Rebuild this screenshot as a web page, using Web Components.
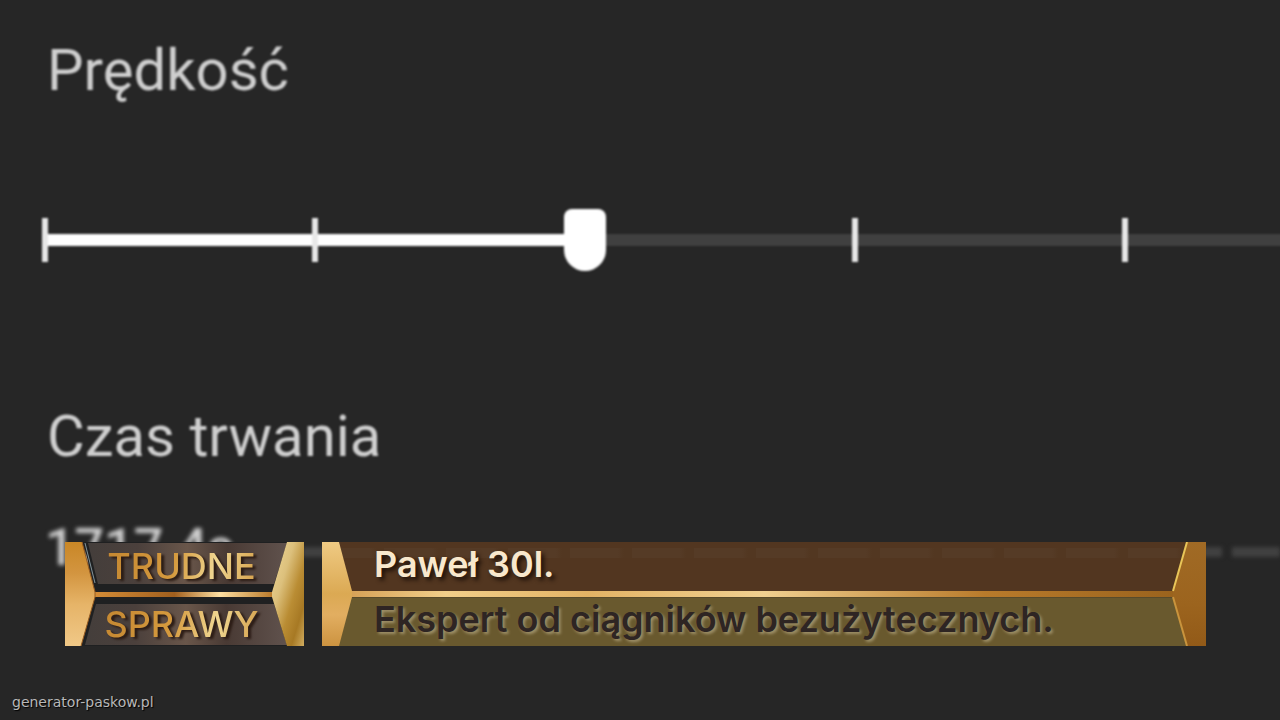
<!DOCTYPE html>
<html lang="pl">
<head>
<meta charset="utf-8">
<meta name="viewport" content="width=device-width, initial-scale=1">
<title>Trudne Sprawy</title>
<style>
html, body { margin: 0; background: #262626; }
</style>
</head>
<body>
<caption-scene>
  <speed-setting label="Prędkość" value="2"></speed-setting>
  <duration-setting label="Czas trwania" value="1717.4s"></duration-setting>
  <show-logo slot="overlay"><span>TRUDNE</span><span slot="second">SPRAWY</span></show-logo>
  <name-plate slot="overlay"><span>Paweł 30l.</span><span slot="detail">Ekspert od ciągników bezużytecznych.</span></name-plate>
  <a slot="credit" href="#">generator-paskow.pl</a>
</caption-scene>

<script>
const define = (name, html, setup) => {
  const template = document.createElement('template');
  template.innerHTML = html;
  customElements.define(name, class extends HTMLElement {
    constructor() {
      super();
      this.attachShadow({ mode: 'open' }).append(template.content.cloneNode(true));
    }
    connectedCallback() { if (setup) setup(this, this.shadowRoot); }
  });
};

define('speed-setting', `
<style>
:host { display: block; color: #cfcfcf; font: 58px/68px Roboto, sans-serif; }
label { display: block; margin-left: 2px; filter: blur(1px); }
.rail { display: grid; width: 110%; margin-top: 102px; height: 68px; align-items: center; filter: blur(1px); }
input, .ticks { grid-area: 1 / 1; }
input { appearance: none; -webkit-appearance: none; box-sizing: border-box; width: calc(100% + 42px);
  height: 68px; margin: 0 0 0 -21px; background: none; outline: none; }
input::-webkit-slider-runnable-track { height: 12px; background:
  linear-gradient(90deg, #fff 40%, #404040 40%) 21px 0 / calc(100% - 42px) 100% no-repeat; }
input::-webkit-slider-thumb { -webkit-appearance: none; width: 42px; height: 62px; margin-top: -25px;
  background: #fff; border-radius: 8px 8px 21px 21px; }
.ticks { display: flex; justify-content: space-between; margin: 0 -3px; pointer-events: none; }
.ticks i { width: 6px; height: 44px; background: #e8e8e8; }
.ticks i:nth-child(3) { visibility: hidden; }
</style>
<label for="speed"></label>
<div class="rail">
  <input id="speed" type="range" min="0" max="5">
  <div class="ticks"><i></i><i></i><i></i><i></i><i></i><i></i></div>
</div>`, (host, root) => {
  root.querySelector('label').textContent = host.getAttribute('label');
  root.querySelector('input').value = host.getAttribute('value');
});

define('duration-setting', `
<style>
:host { display: block; color: #cfcfcf; font: 58px/68px Roboto, sans-serif; }
h2 { margin: 0 0 0 2px; font: inherit; filter: blur(1px); }
.row { display: flex; align-items: center; gap: 68px; margin-top: 48px; filter: blur(2px); }
output { font: 500 52px/60px Roboto, sans-serif; }
.line { flex: 1; height: 10px; margin: 8px -8px 0 0;
  background: repeating-linear-gradient(90deg, #414141 0 52px, transparent 52px 62px); }
</style>
<h2></h2>
<div class="row"><output></output><div class="line"></div></div>`, (host, root) => {
  root.querySelector('h2').textContent = host.getAttribute('label');
  root.querySelector('output').textContent = host.getAttribute('value');
});

define('show-logo', `
<style>
:host { display: grid; flex: none; width: 239px; height: 104px; }
svg, .words { grid-area: 1 / 1; }
.words { display: grid; grid-template-rows: 48px 56px; justify-items: center; align-items: center; padding-right: 6px;
  font: 500 36px/44px Inter, sans-serif; filter: drop-shadow(3px 2px 1px #2b1b14); }
.words div { background: linear-gradient(100deg, #c48731, #d59a3e 45%, #f0d792 72%, #d5a04a);
  -webkit-background-clip: text; background-clip: text; color: transparent; }
.words div:last-child { padding-top: 12px; }
</style>
<svg width="239" height="104" viewBox="0 0 239 104" aria-hidden="true">
  <defs>
    <linearGradient id="panel" x1="0" x2="1"><stop offset="0" stop-color="#443e3b"/><stop offset=".25" stop-color="#4b403c"/><stop offset=".5" stop-color="#69564a"/><stop offset=".7" stop-color="#493a34"/><stop offset="1" stop-color="#60524d"/></linearGradient>
    <linearGradient id="left" x1="0" y1="0" x2="0" y2="1"><stop offset="0" stop-color="#c98726"/><stop offset=".3" stop-color="#d39540"/><stop offset=".6" stop-color="#e6b468"/><stop offset="1" stop-color="#f0c887"/></linearGradient>
    <linearGradient id="right" x1="0" y1="0" x2="1" y2="1"><stop offset="0" stop-color="#f1d99a"/><stop offset=".35" stop-color="#dcc07c"/><stop offset=".6" stop-color="#ba8d34"/><stop offset=".8" stop-color="#a77924"/><stop offset="1" stop-color="#d1ad60"/></linearGradient>
    <linearGradient id="bar" x1="0" x2="1"><stop offset="0" stop-color="#d58d37"/><stop offset=".45" stop-color="#a15f1e"/><stop offset=".7" stop-color="#ffe0a2"/><stop offset="1" stop-color="#b77728"/></linearGradient>
  </defs>
  <path d="M18 0H224L208 50L224 104H17L31 50Z" fill="#1f2021"/>
  <path d="M23 1H222L209 42H33Z" fill="url(#panel)"/>
  <path d="M31 62H209L222 103H20Z" fill="url(#panel)"/>
  <path d="M20 1L30 41" stroke="#83949b" stroke-width="1"/>
  <rect x="28" y="50" width="181" height="5" fill="url(#bar)"/>
  <path d="M0 0H17L30 50V55L16 104H0Z" fill="url(#left)"/>
  <path d="M17 0L30 50V55L16 104" fill="none" stroke="#985c20"/>
  <path d="M239 0H222L207 50V55L222 104H239Z" fill="url(#right)"/>
</svg>
<div class="words"><div><slot></slot></div><div><slot name="second"></slot></div></div>`);

define('name-plate', `
<style>
:host { display: grid; flex: 1; min-width: 0; grid-template: 49px 6px 49px / 30px 1fr 34px;
  font: 600 36px/44px Inter, sans-serif; white-space: nowrap; }
.name, .detail { grid-column: 1 / -1; box-sizing: border-box; padding-left: 52px; }
.name { grid-row: 1; color: #f8e8cd; text-shadow: 3px 3px 4px #1d1009;
  background: repeating-linear-gradient(90deg, #553b26 0 48px, #523721 54px 62px) 0 6px / 100% 10px no-repeat, #523620; }
.detail { grid-row: 3; color: #2e2523; background: #69592e; border-top: 1px solid #584b2b; line-height: 42px;
  text-shadow: 2px 2px 3px #a0926a; }
.bar { grid-area: 2 / 1 / 3 / -1;
  background: linear-gradient(90deg, #ce9448, #f2cf8a 14%, #e3b365 30%, #f0d090 50%, #b97b2b 75%, #955f1b); }
svg { grid-row: 1 / -1; height: 104px; }
.start { grid-column: 1; width: 30px; }
.end { grid-column: 3; width: 34px; }
</style>
<div class="name"><slot></slot></div>
<div class="bar"></div>
<div class="detail"><slot name="detail"></slot></div>
<svg class="start" viewBox="0 0 30 104" aria-hidden="true">
  <defs><linearGradient id="gold" x1="0" y1="0" x2="0" y2="1"><stop offset="0" stop-color="#efca83"/><stop offset=".5" stop-color="#dba953"/><stop offset=".7" stop-color="#e2ae61"/><stop offset="1" stop-color="#cc9340"/></linearGradient></defs>
  <path d="M0 0H17L30 49V55L17 104H0Z" fill="url(#gold)"/>
</svg>
<svg class="end" viewBox="0 0 34 104" aria-hidden="true">
  <defs><linearGradient id="bronze" x1="0" y1="0" x2="0" y2="1"><stop offset="0" stop-color="#a06a25"/><stop offset=".6" stop-color="#9c641e"/><stop offset="1" stop-color="#925a18"/></linearGradient></defs>
  <path d="M34 0H15L1 49V55L15 104H34Z" fill="url(#bronze)"/>
  <path d="M15 0L1 49" stroke="#e9c659" stroke-width="2"/>
  <path d="M1 55L15 104" stroke="#c9943d" stroke-width="2"/>
</svg>`);

define('caption-scene', `
<style>
:host { display: block; position: relative; box-sizing: border-box; min-height: 100vh; overflow: hidden;
  background: #262626; padding: 36px 8px 0 45px; }
.settings { display: grid; grid-template-columns: minmax(0, 1fr); gap: 128px; }
.overlay { position: absolute; left: 65px; right: 74px; bottom: 74px; display: flex; gap: 18px; }
.credit { position: absolute; left: 12px; bottom: 8px; }
::slotted(a) { color: #b8b8b8; font: 14px/20px "DejaVu Sans", sans-serif; text-decoration: none; text-shadow: 1px 1px 1px #000; }
</style>
<div class="settings"><slot></slot></div>
<div class="overlay"><slot name="overlay"></slot></div>
<div class="credit"><slot name="credit"></slot></div>`);
</script>
</body>
</html>
